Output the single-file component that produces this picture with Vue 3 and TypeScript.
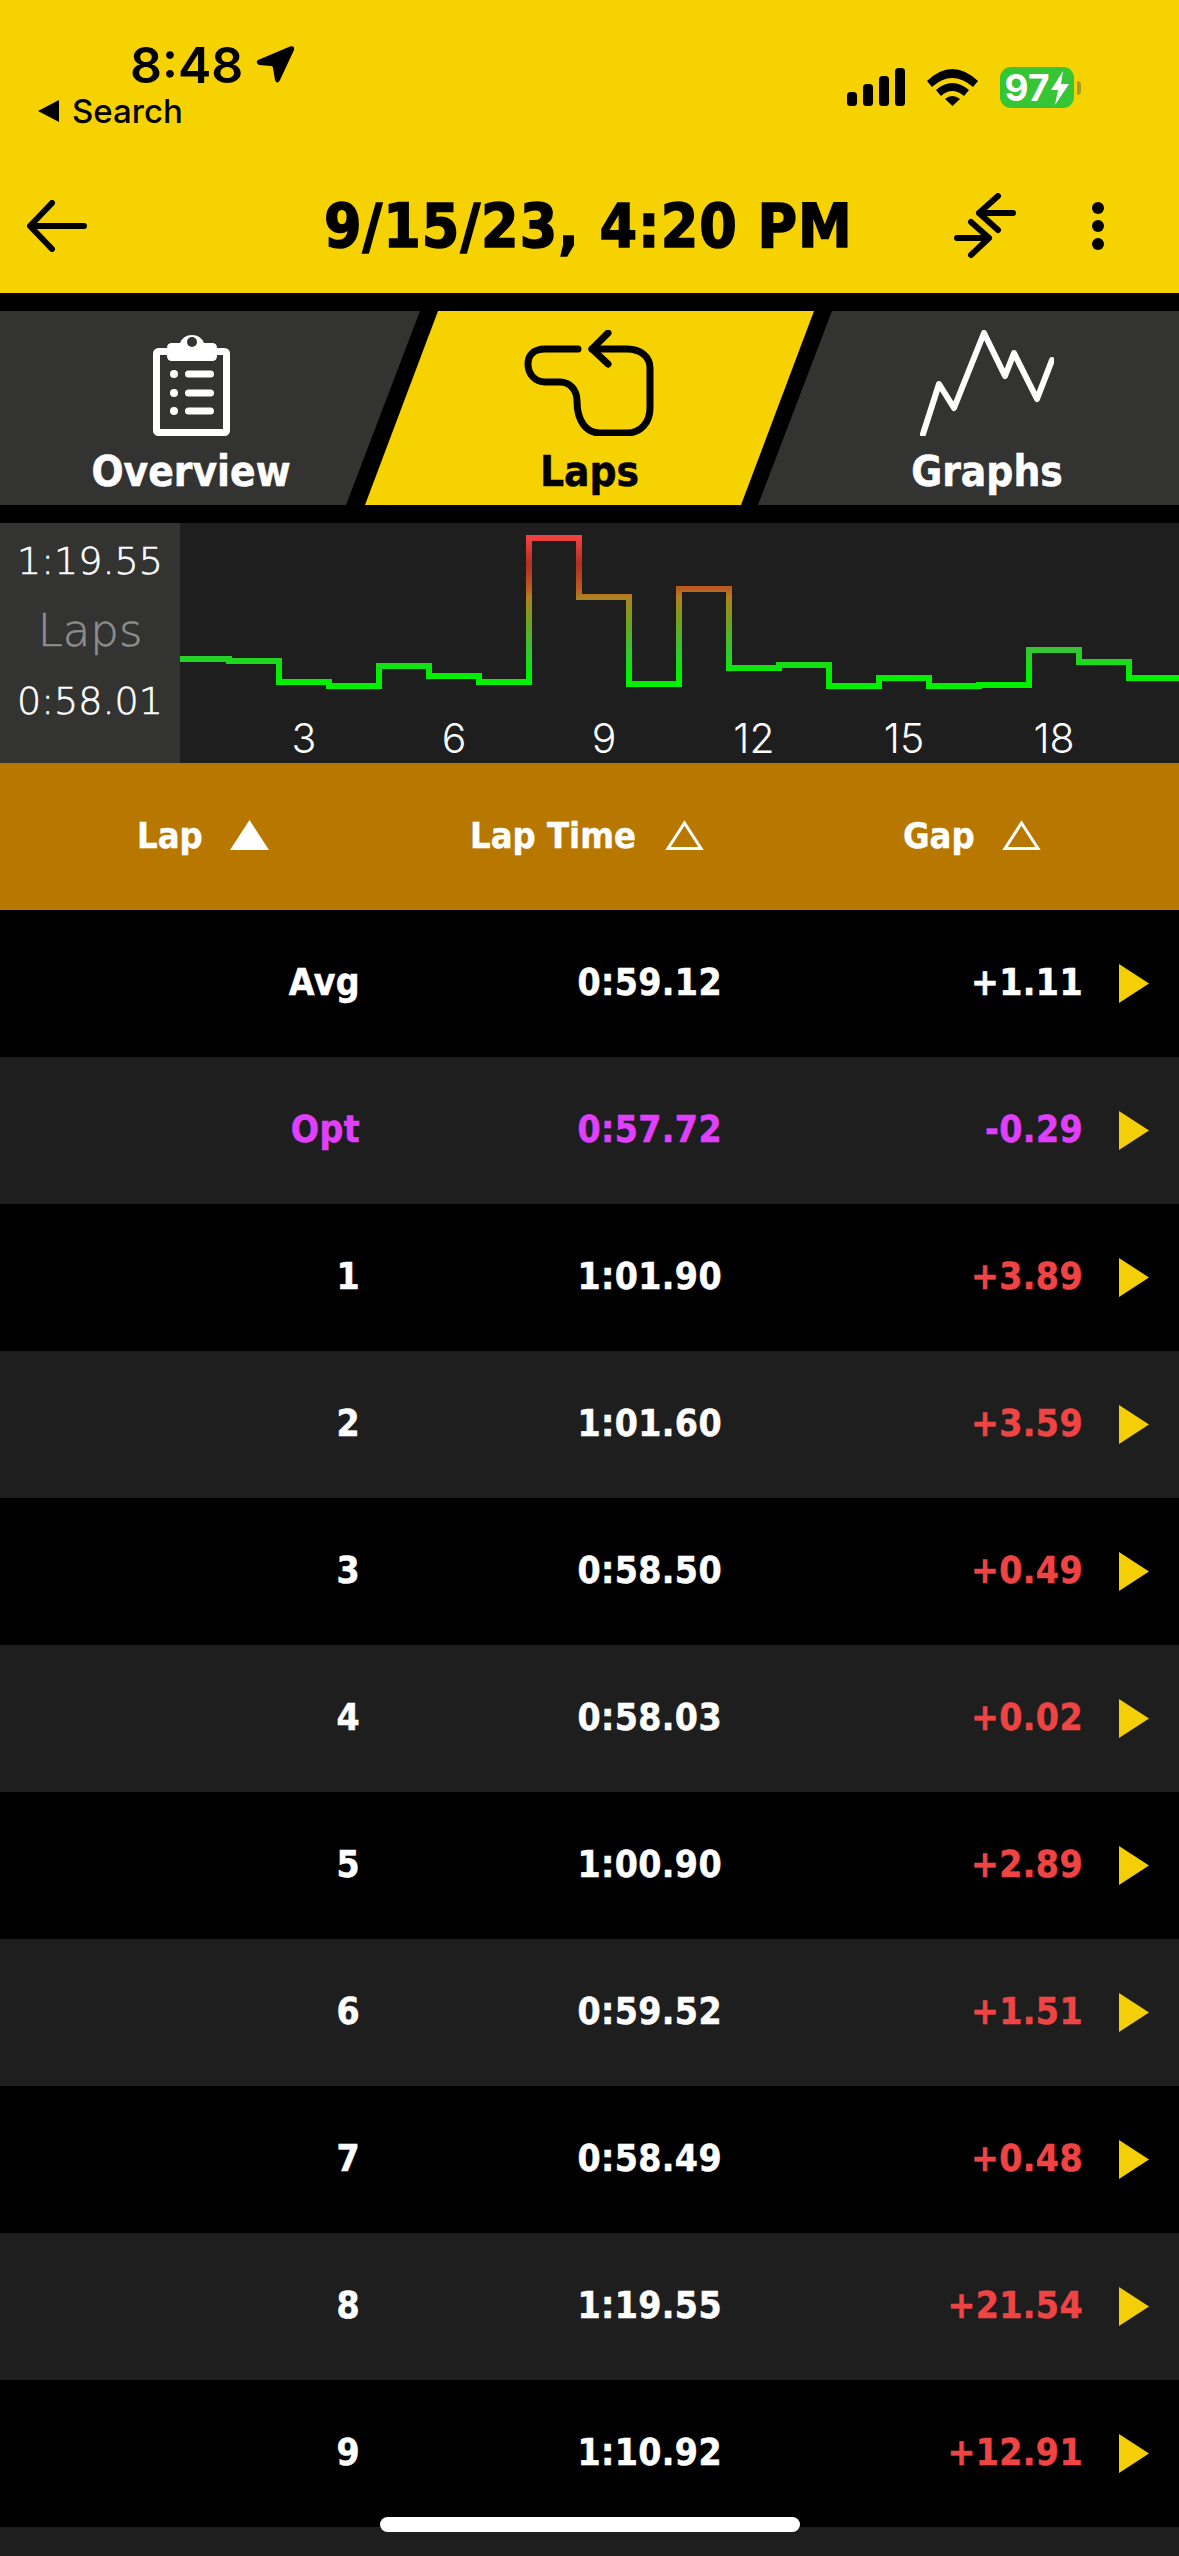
<script setup lang="ts">
type Row = { lap: string; time: string; gap: string; tone?: 'opt' | 'slow' }

const rows: Row[] = [
  { lap: 'Avg', time: '0:59.12', gap: '+1.11' },
  { lap: 'Opt', time: '0:57.72', gap: '-0.29', tone: 'opt' },
  { lap: '1', time: '1:01.90', gap: '+3.89', tone: 'slow' },
  { lap: '2', time: '1:01.60', gap: '+3.59', tone: 'slow' },
  { lap: '3', time: '0:58.50', gap: '+0.49', tone: 'slow' },
  { lap: '4', time: '0:58.03', gap: '+0.02', tone: 'slow' },
  { lap: '5', time: '1:00.90', gap: '+2.89', tone: 'slow' },
  { lap: '6', time: '0:59.52', gap: '+1.51', tone: 'slow' },
  { lap: '7', time: '0:58.49', gap: '+0.48', tone: 'slow' },
  { lap: '8', time: '1:19.55', gap: '+21.54', tone: 'slow' },
  { lap: '9', time: '1:10.92', gap: '+12.91', tone: 'slow' },
]

// y of each lap's step, chart coordinates (chart starts at x=180, y=523)
const stepY = [136, 138, 159, 163, 143, 153, 159, 15, 74, 161, 66, 145, 142, 163, 155, 163, 162, 127, 139, 155]
const stepW = 50
const stepX0 = -1

const stepPath = stepY
  .map((y, i) => {
    const x = stepX0 + i * stepW
    return `${i === 0 ? 'M' : 'L'}${x} ${y} L${x + stepW} ${y}`
  })
  .join(' ')

const ticks = [3, 6, 9, 12, 15, 18].map((n) => ({ n, x: 124 + (n - 3) * 50 }))
</script>

<template>
  <div class="page">
    <header class="top">
      <div class="status">
        <div class="status-left">
          <div class="clock">
            <span>8:48</span>
            <svg class="loc" width="40" height="40" viewBox="0 0 40 40">
              <path d="M2 15 L34 1.500 Q39 0 38 5 L24 35 Q21 40 19 35 L17 23 Q17 21 15 21 L3 20 Q-1 17 2 15 Z" fill="#000" />
            </svg>
          </div>
          <div class="crumb">
            <svg width="22" height="22" viewBox="0 0 22 22"><path d="M0 11 L21 0 V22 Z" fill="#000" /></svg>
            <span>Search</span>
          </div>
        </div>
        <div class="status-right">
          <svg width="58" height="38" viewBox="0 0 58 38">
            <rect x="0" y="24" width="10" height="14" rx="3.5" />
            <rect x="16" y="16" width="10" height="22" rx="3.5" />
            <rect x="32" y="8" width="10" height="30" rx="3.5" />
            <rect x="48" y="0" width="10" height="38" rx="3.5" />
          </svg>
          <svg width="51" height="38" viewBox="0 0 51 38">
            <path d="M0 13 Q25 -11 51 13 L46 19 Q25 1 5 19 Z" />
            <path d="M9 22 Q25 8 42 22 L37 28 Q25 18 14 28 Z" />
            <path d="M18 31 Q25 25 33 31 L25.500 38 Z" />
          </svg>
          <div class="battery">
            <div class="batt-body">
              <span>97</span>
              <svg width="18" height="34" viewBox="0 0 18 34"><path d="M12 0 L0 19 H7 L4 34 L18 13 H10 Z" fill="#fff" /></svg>
            </div>
            <div class="batt-nub"></div>
          </div>
        </div>
      </div>
      <div class="nav">
        <svg class="back" width="60" height="52" viewBox="0 0 60 52" fill="none" stroke="#000" stroke-width="6" stroke-linecap="round" stroke-linejoin="round">
          <path d="M57 26 H4 M25 3 L3 26 L25 49" />
        </svg>
        <div class="title">9/15/23, 4:20 PM</div>
        <svg class="swap" width="64" height="66" viewBox="0 0 64 66" fill="none" stroke="#000" stroke-width="6" stroke-linecap="round" stroke-linejoin="round">
          <path d="M60 20 H26 M45 3 L26 20 L45 37" />
          <path d="M4 45 H36 M18 29 L36 45 L18 62" />
        </svg>
        <div class="dots"><i></i><i></i><i></i></div>
      </div>
    </header>

    <nav class="tabs">
      <div class="tab tab-a">
        <svg class="clipboard" width="84" height="106" viewBox="0 0 84 106" fill="none">
          <rect x="3.500" y="21.500" width="70" height="81" rx="2" stroke="#fff" stroke-width="7" />
          <path d="M19 13 H27 A13 13 0 0 1 51 13 H59 Q64 13 64 18 V26 Q64 31 59 31 H19 Q14 31 14 26 V18 Q14 13 19 13 Z" fill="#fff" />
          <circle cx="39" cy="12" r="5" fill="#333331" />
          <circle cx="21" cy="44" r="4" fill="#fff" />
          <circle cx="21" cy="63" r="4" fill="#fff" />
          <circle cx="21" cy="81" r="4" fill="#fff" />
          <path d="M35.500 44 H57.500 M35.500 63 H57.500 M35.500 81 H57.500" stroke="#fff" stroke-width="7" stroke-linecap="round" />
        </svg>
        <span>Overview</span>
      </div>
      <div class="tab tab-b">
        <svg width="134" height="106" viewBox="0 0 134 106" fill="none" stroke="#000" stroke-width="7" stroke-linecap="round" stroke-linejoin="round">
          <path d="M55 19 H22 C10 19 5 26 5 34 C5 44 12 52 22 52 H37 C47 52 54 60 54 71 C54 92 64 103 77 103 H104 C118 103 127 92 127 78 V38 C127 27 118 19 104 19 H69" />
          <path d="M85 3 L69 19 L85 34" />
        </svg>
        <span>Laps</span>
      </div>
      <div class="tab tab-c">
        <svg width="134" height="106" viewBox="0 0 134 106" fill="none" stroke="#fff" stroke-width="6" stroke-linecap="round" stroke-linejoin="round">
          <path d="M3 104 L19 54 L34 78 L64 3 L85 46 L94 23 L117 69 L132 30" />
        </svg>
        <span>Graphs</span>
      </div>
    </nav>

    <section class="chart">
      <div class="range">
        <span>1:19.55</span>
        <span class="range-name">Laps</span>
        <span>0:58.01</span>
      </div>
      <svg class="plot" width="999" height="240" viewBox="0 0 999 240">
        <defs>
          <linearGradient id="pace" gradientUnits="userSpaceOnUse" x1="0" y1="163" x2="0" y2="15">
            <stop offset="0" stop-color="#00f000" />
            <stop offset="0.08" stop-color="#00f000" />
            <stop offset="0.24" stop-color="#35c535" />
            <stop offset="0.44" stop-color="#70a020" />
            <stop offset="0.6" stop-color="#b08020" />
            <stop offset="0.66" stop-color="#bb5a20" />
            <stop offset="0.82" stop-color="#b03020" />
            <stop offset="1" stop-color="#f04040" />
          </linearGradient>
        </defs>
        <path :d="stepPath" fill="none" stroke="url(#pace)" stroke-width="6" stroke-linejoin="miter" />
        <text v-for="t in ticks" :key="t.n" :x="t.x" y="230" class="tick" text-anchor="middle">{{ t.n }}</text>
      </svg>
    </section>

    <div class="head">
      <div class="hcell hcell-lap">
        <span>Lap</span>
        <svg width="39" height="30" viewBox="0 0 39 30"><path d="M19.500 0 L39 30 H0 Z" fill="#fff" /></svg>
      </div>
      <div class="hcell hcell-time">
        <span>Lap Time</span>
        <svg width="39" height="30" viewBox="0 0 39 30"><path d="M19.500 3 L36 28.500 H3 Z" fill="none" stroke="#fff" stroke-width="3" /></svg>
      </div>
      <div class="hcell hcell-gap">
        <span>Gap</span>
        <svg width="39" height="30" viewBox="0 0 39 30"><path d="M19.500 3 L36 28.500 H3 Z" fill="none" stroke="#fff" stroke-width="3" /></svg>
      </div>
    </div>

    <div class="list">
      <div v-for="r in rows" :key="r.lap" class="row" :class="r.tone === 'opt' ? 'is-opt' : ''">
        <span>{{ r.lap }}</span>
        <span>{{ r.time }}</span>
        <span :class="{ slow: r.tone === 'slow' }">{{ r.gap }}</span>
        <svg class="go" width="30" height="39" viewBox="0 0 30 39"><path d="M0 0 L30 19.500 L0 39 Z" fill="#f5cf05" /></svg>
      </div>
      <div class="row row-last"></div>
    </div>

    <div class="home"></div>
  </div>
</template>

<style>
html,
body {
  margin: 0;
  background: #000;
}
</style>

<style scoped>
.page {
  position: relative;
  width: 1179px;
  height: 2556px;
  overflow: hidden;
  background: #000;
  font-family: 'DejaVu Sans', 'Liberation Sans', sans-serif;
  font-stretch: condensed;
  font-weight: 700;
  color: #fff;
}

.top {
  height: 293px;
  background: #f6d200;
  color: #000;
  box-sizing: border-box;
  padding-top: 37px;
}

.status {
  display: flex;
  justify-content: space-between;
  height: 100px;
}
.status-left {
  display: flex;
  flex-direction: column;
}
.clock {
  display: flex;
  align-items: center;
  gap: 13px;
  margin-left: 130px;
  height: 56px;
  font: 600 50px/56px Inter, sans-serif;
}
.crumb {
  display: flex;
  align-items: center;
  gap: 12px;
  margin-left: 38px;
  height: 36px;
  font: 500 33px/36px Inter, sans-serif;
}
.status-right {
  display: flex;
  align-items: flex-start;
  gap: 22px;
  padding: 31px 98px 0 0;
}
.status-right svg {
  fill: #000;
}
.battery {
  display: flex;
  align-items: center;
  gap: 3px;
  margin-top: -1px;
}
.batt-body {
  display: flex;
  align-items: center;
  justify-content: center;
  gap: 2px;
  width: 74px;
  height: 41px;
  border-radius: 11px;
  background: #35c535;
  color: #fff;
  font: 700 37px/41px Inter, sans-serif;
}
.batt-nub {
  width: 4px;
  height: 14px;
  border-radius: 0 4px 4px 0;
  background: #a89a20;
}

.nav {
  display: flex;
  align-items: center;
  height: 66px;
  margin-top: 56px;
  padding-left: 27px;
}
.title {
  margin-left: 237px;
  width: 527px;
  font-size: 60px;
  line-height: 66px;
  letter-spacing: 1px;
  -webkit-text-stroke: 1.5px #000;
  white-space: nowrap;
}
.swap {
  margin-left: 102px;
}
.dots {
  display: flex;
  flex-direction: column;
  gap: 6px;
  margin-left: 75px;
}
.dots i {
  display: block;
  width: 12px;
  height: 12px;
  border-radius: 50%;
  background: #000;
}

.tabs {
  display: flex;
  height: 194px;
  margin-top: 18px;
}
.tab {
  display: flex;
  flex-direction: column;
  align-items: center;
  box-sizing: border-box;
  height: 100%;
  padding-top: 19px;
  background: #333331;
  font-size: 42px;
  line-height: 50px;
  -webkit-text-stroke: 0.5px currentColor;
}
.tab span {
  margin-top: 11px;
}
.clipboard {
  margin-left: 8px;
}
.tab-a {
  width: 420px;
  padding-right: 38px;
  clip-path: polygon(0 0, 100% 0, 346px 100%, 0 100%);
}
.tab-b {
  width: 449px;
  margin-left: -55px;
  background: #f6d200;
  color: #000;
  clip-path: polygon(73px 0, 100% 0, 376px 100%, 0 100%);
}
.tab-c {
  width: 421px;
  margin-left: -56px;
  padding-left: 37px;
  clip-path: polygon(74px 0, 100% 0, 100% 100%, 0 100%);
}

.chart {
  display: flex;
  height: 240px;
  margin-top: 18px;
  background: #1e1e1e;
}
.range {
  display: flex;
  flex-direction: column;
  align-items: center;
  gap: 16px;
  box-sizing: border-box;
  width: 180px;
  padding-top: 11px;
  background: #333331;
  font-family: 'DejaVu Sans', sans-serif;
  font-stretch: normal;
  font-weight: 200;
  font-size: 38px;
  line-height: 54px;
  -webkit-text-stroke: 0.6px currentColor;
}
.range-name {
  color: #8c8c8c;
  font-size: 45px;
}
.plot {
  display: block;
  flex: none;
}
.tick {
  fill: #fff;
  font: 300 41px Inter, sans-serif;
}

.head {
  display: grid;
  grid-template-columns: 359px 361px 459px;
  height: 147px;
  background: #b87800;
  font-size: 36px;
  -webkit-text-stroke: 0.4px #fff;
}
.hcell {
  display: flex;
  align-items: center;
  box-sizing: border-box;
}
.hcell span {
  margin-top: -2px;
}
.hcell svg {
  margin: -4px 0 0 27px;
}
.hcell-lap {
  padding-left: 137px;
}
.hcell-time {
  padding-left: 111px;
}
.hcell-time svg {
  margin-left: 29px;
}
.hcell-gap {
  padding-left: 183px;
}

.row {
  display: grid;
  grid-template-columns: 360px 362px 361px 1fr;
  align-items: center;
  height: 147px;
  font-size: 37px;
  letter-spacing: 0.4px;
  text-align: right;
  -webkit-text-stroke: 0.5px currentColor;
}
.row span {
  margin-top: -3px;
}
.row:nth-child(even) {
  background: #1e1e1e;
}
.row.row-last {
  background: #1e1e1e;
}
.is-opt {
  color: #e040fb;
}
.slow {
  color: #ef4444;
}
.go {
  display: block;
  margin-left: 36px;
}

.home {
  position: absolute;
  left: 380px;
  top: 2517px;
  width: 420px;
  height: 15px;
  border-radius: 8px;
  background: #fff;
}
</style>
